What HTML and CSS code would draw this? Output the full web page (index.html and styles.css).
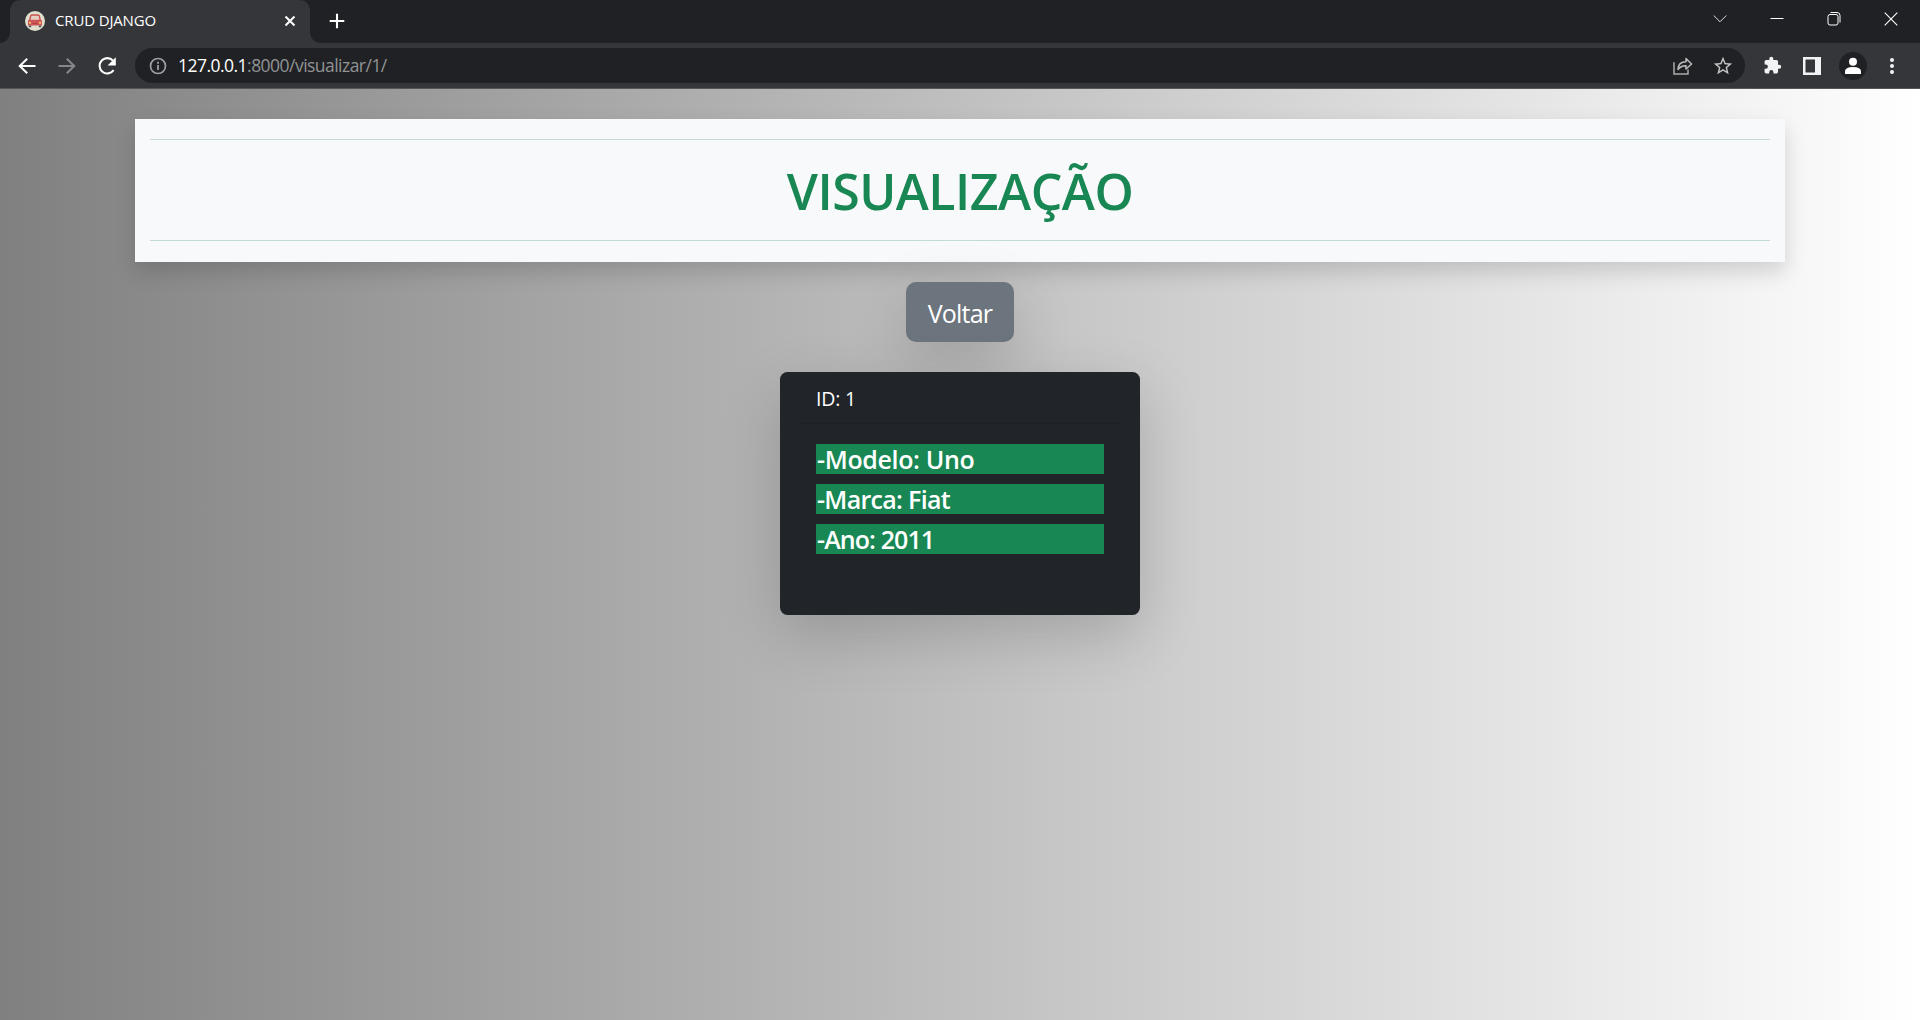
FILE: index.html
```html
<!DOCTYPE html>
<html lang="pt-br">
<head>
<meta charset="utf-8">
<title>CRUD DJANGO</title>
<link rel="stylesheet" href="styles.css">
</head>
<body>
<div class="tabstrip">
  <div class="tab">
    <svg class="favicon" viewBox="0 0 20 20"><circle cx="10" cy="10" r="10" fill="#e0dfce"/><path d="M4.6 10 5.6 5.2Q5.8 4 7 4h6q1.2 0 1.4 1.2L15.4 10" fill="#e5cfc0" stroke="#c9514f" stroke-width="1.4"/><path d="M3 10.2Q3 8.8 4.5 8.8h11Q17 8.8 17 10.2V14.5H3z" fill="#cf5656"/><path d="M3.8 14.5h2.4v1.8H3.8zM13.8 14.5h2.4v1.8h-2.4z" fill="#514f58"/><circle cx="5" cy="11.8" r="1.1" fill="#f5c96a"/><circle cx="15" cy="11.8" r="1.1" fill="#f5c96a"/><path d="M7.5 12.6h5" stroke="#a83f45"/></svg>
    <span class="tab-title">CRUD DJANGO</span>
    <svg class="tab-close" viewBox="0 0 12 12"><path d="M1.5 1.5l9 9M10.5 1.5l-9 9" stroke="#fff" stroke-width="2"/></svg>
  </div>
  <svg class="new-tab" viewBox="0 0 16 16"><path d="M8 .7v14.6M.7 8h14.6" stroke="#fff" stroke-width="2.1"/></svg>
  <div class="window-controls">
    <svg viewBox="0 0 14 14"><path d="M.7 3.5l6.3 6.3L13.3 3.5" fill="none" stroke="#ddd"/></svg>
    <svg viewBox="0 0 14 14"><path d="M.5 6.5h13" stroke="#fff"/></svg>
    <svg viewBox="0 0 14 14"><rect x="1" y="2.5" width="10" height="10.5" rx="2" fill="none" stroke="#fff"/><path d="M3.5 .5H10q3 0 3 3v7" fill="none" stroke="#fff"/></svg>
    <svg viewBox="0 0 14 14"><path d="M.7.7l12.6 12.6M13.3.7L.7 13.3" stroke="#fff" stroke-width="1.1"/></svg>
  </div>
</div>
<div class="toolbar">
  <svg class="nav" viewBox="0 0 24 24"><path d="M20.5 12H5M12.2 4.7L4.7 12l7.5 7.3" fill="none" stroke="#fff" stroke-width="2"/></svg>
  <svg class="nav" viewBox="0 0 24 24"><path d="M3.5 12H19M11.8 4.7l7.5 7.3-7.5 7.3" fill="none" stroke="#86878a" stroke-width="2"/></svg>
  <svg class="nav" viewBox="0 0 24 24"><path d="M18.6 16.2A7.7 7.7 0 1 1 18 6.6" fill="none" stroke="#fff" stroke-width="2.1"/><path d="M20.8 3.3v8.2h-8.2z" fill="#fff"/></svg>
  <div class="omnibox">
    <svg class="info" viewBox="0 0 18 18"><circle cx="9" cy="9" r="7.5" fill="none" stroke="#9aa0a6" stroke-width="1.7"/><path d="M9 8v5M9 4.8v1.9" stroke="#9aa0a6" stroke-width="1.8"/></svg>
    <span class="url"><b>127.0.0.1</b>:8000/visualizar/1/</span>
    <svg class="share" viewBox="0 0 20 18"><path d="M1 5.3V17h14v-4.5" fill="none" stroke="#aaa" stroke-width="1.5"/><path d="M5 12.5q.3-7.7 8-7.7V1.5L18.6 7 13 12V8.7q-5-.3-8 3.8z" fill="none" stroke="#bbb" stroke-width="1.5" stroke-linejoin="round"/></svg>
    <svg class="star" viewBox="0 0 24 24"><path d="M22 9.24l-7.19-.62L12 2 9.19 8.63 2 9.24l5.46 4.73L5.82 21 12 17.27 18.18 21l-1.63-7.03zM12 15.4l-3.76 2.27 1-4.28-3.32-2.88 4.38-.38L12 6.1l1.71 4.04 4.38.38-3.32 2.88 1 4.28z" fill="#c4c5c6"/></svg>
  </div>
  <svg class="puzzle" viewBox="0 0 24 24"><path d="M20.5 11H19V7a2 2 0 0 0-2-2h-4V3.5a2.5 2.5 0 0 0-5 0V5H4a2 2 0 0 0-2 2v3.8h1.5a2.7 2.7 0 0 1 0 5.4H2V20a2 2 0 0 0 2 2h3.8v-1.5a2.7 2.7 0 0 1 5.4 0V22H17a2 2 0 0 0 2-2v-4h1.5a2.5 2.5 0 0 0 0-5z" fill="#f1f3f4"/></svg>
  <svg class="panel" viewBox="0 0 18 18"><path fill-rule="evenodd" d="M0 0h18v18H0zM2.5 2.5v13H12v-13z" fill="#f1f3f4"/></svg>
  <svg class="avatar" viewBox="0 0 28 28"><circle cx="14" cy="14" r="14" fill="#202124"/><circle cx="14" cy="9.8" r="4" fill="#fff"/><path d="M6 21.5v-2q0-4.5 8-4.5t8 4.5v2q0 .5-.7.5H6.7q-.7 0-.7-.5z" fill="#fff"/></svg>
  <svg class="menu" viewBox="0 0 6 18"><g fill="#f1f3f4"><circle cx="3" cy="3" r="2"/><circle cx="3" cy="9" r="2"/><circle cx="3" cy="15" r="2"/></g></svg>
</div>
<main class="page">
  <header class="banner">
    <hr class="rule">
    <h1 class="title">VISUALIZAÇÃO</h1>
    <hr class="rule">
  </header>
  <a class="button">Voltar</a>
  <section class="card">
    <div class="card-header">ID: 1</div>
    <div class="card-body">
      <h5 class="field modelo">-Modelo: Uno</h5>
      <h5 class="field marca">-Marca: Fiat</h5>
      <h5 class="field ano">-Ano: 2011</h5>
    </div>
  </section>
</main>
</body>
</html>
```

FILE: styles.css
```css
* { box-sizing: border-box; }
body { margin: 0; height: 1020px; overflow: hidden; display: flex; flex-direction: column; font-family: "Open Sans", "Noto Sans", sans-serif; color: #fff; }
svg { display: block; flex: none; }
.tabstrip { height: 43px; flex: none; background: #202124; display: flex; padding-left: 10px; }
.tab { position: relative; width: 300px; background: #35363a; border-radius: 10px 10px 0 0; display: flex; align-items: center; padding: 0 14px 2px 15px; }
.tab::before, .tab::after { content: ""; position: absolute; bottom: 0; width: 10px; height: 10px; }
.tab::before { left: -10px; background: radial-gradient(circle at 0 0, transparent 9.5px, #35363a 10px); }
.tab::after { right: -10px; background: radial-gradient(circle at 100% 0, transparent 9.5px, #35363a 10px); }
.favicon { width: 20px; height: 20px; }
.tab-title { font-size: 15px; letter-spacing: -0.15px; margin-left: 10px; flex: 1; line-height: 20px; padding-bottom: 2px; }
.tab-close { width: 12px; height: 12px; }
.new-tab { width: 16px; height: 16px; margin: 13px 0 0 19px; }
.window-controls { margin-left: auto; display: flex; gap: 43px; padding: 12px 22px 0 0; }
.window-controls svg { width: 14px; height: 14px; }
.toolbar { height: 46px; flex: none; background: #35363a; border-bottom: 1px solid #55565a; display: flex; align-items: center; padding-left: 15px; }
.nav { width: 24px; height: 24px; margin-right: 16px; }
.omnibox { width: 1610px; height: 35px; border-radius: 18px; background: #202124; display: flex; align-items: center; padding: 0 11px 0 14px; }
.info { width: 18px; height: 18px; }
.url { flex: 1; margin-left: 11px; font-size: 17.5px; letter-spacing: -0.53px; line-height: 24px; padding-bottom: 2px; color: #919395; }
.url b { font-weight: 400; color: #fff; }
.share { width: 20px; height: 18px; margin-right: 19px; }
.star { width: 22px; height: 22px; }
.puzzle { width: 19px; height: 19px; margin-left: 18px; }
.panel { width: 18px; height: 18px; margin-left: 21px; }
.avatar { width: 28px; height: 28px; margin-left: 18px; }
.menu { width: 6px; height: 18px; margin-left: 22px; }
.page { flex: 1; background: linear-gradient(to right, #808080, #fff); padding-top: 30px; display: flex; flex-direction: column; align-items: center; }
.banner { width: 1650px; height: 143px; padding: 20px 15px; background: #f8f9fa; box-shadow: 0 10px 20px rgba(0,0,0,.15); display: flex; flex-direction: column; }
.rule { margin: 0; border: 0; width: 100%; height: 1px; background: #c0dbd0; }
.title { margin: 20px 0; height: 60px; line-height: 62px; text-align: center; font-size: 50px; font-weight: 600; color: #198754; letter-spacing: -0.5px; }
.button { margin-top: 20px; width: 108px; height: 60px; border-radius: 10px; background: #6c757d; box-shadow: 0 20px 60px rgba(0,0,0,.175); font-size: 25px; line-height: 62px; text-align: center; letter-spacing: -0.8px; }
.card { margin-top: 30px; width: 360px; height: 243px; padding: 0 16px; border-radius: 7.5px; background: #212529; box-shadow: 0 20px 60px rgba(0,0,0,.175); }
.card-header { height: 52px; padding: 12px 20px; line-height: 29px; font-size: 19.5px; letter-spacing: -0.2px; border-bottom: 1px solid #1d2024; }
.card-body { padding: 20px; display: flex; flex-direction: column; gap: 10px; }
.field { margin: 0; height: 30px; line-height: 30px; font-size: 25px; font-weight: 600; background: #198754; padding-left: 1px; }
.modelo { letter-spacing: -0.35px; }
.marca { letter-spacing: -0.7px; }
.ano { letter-spacing: -0.9px; }
```
